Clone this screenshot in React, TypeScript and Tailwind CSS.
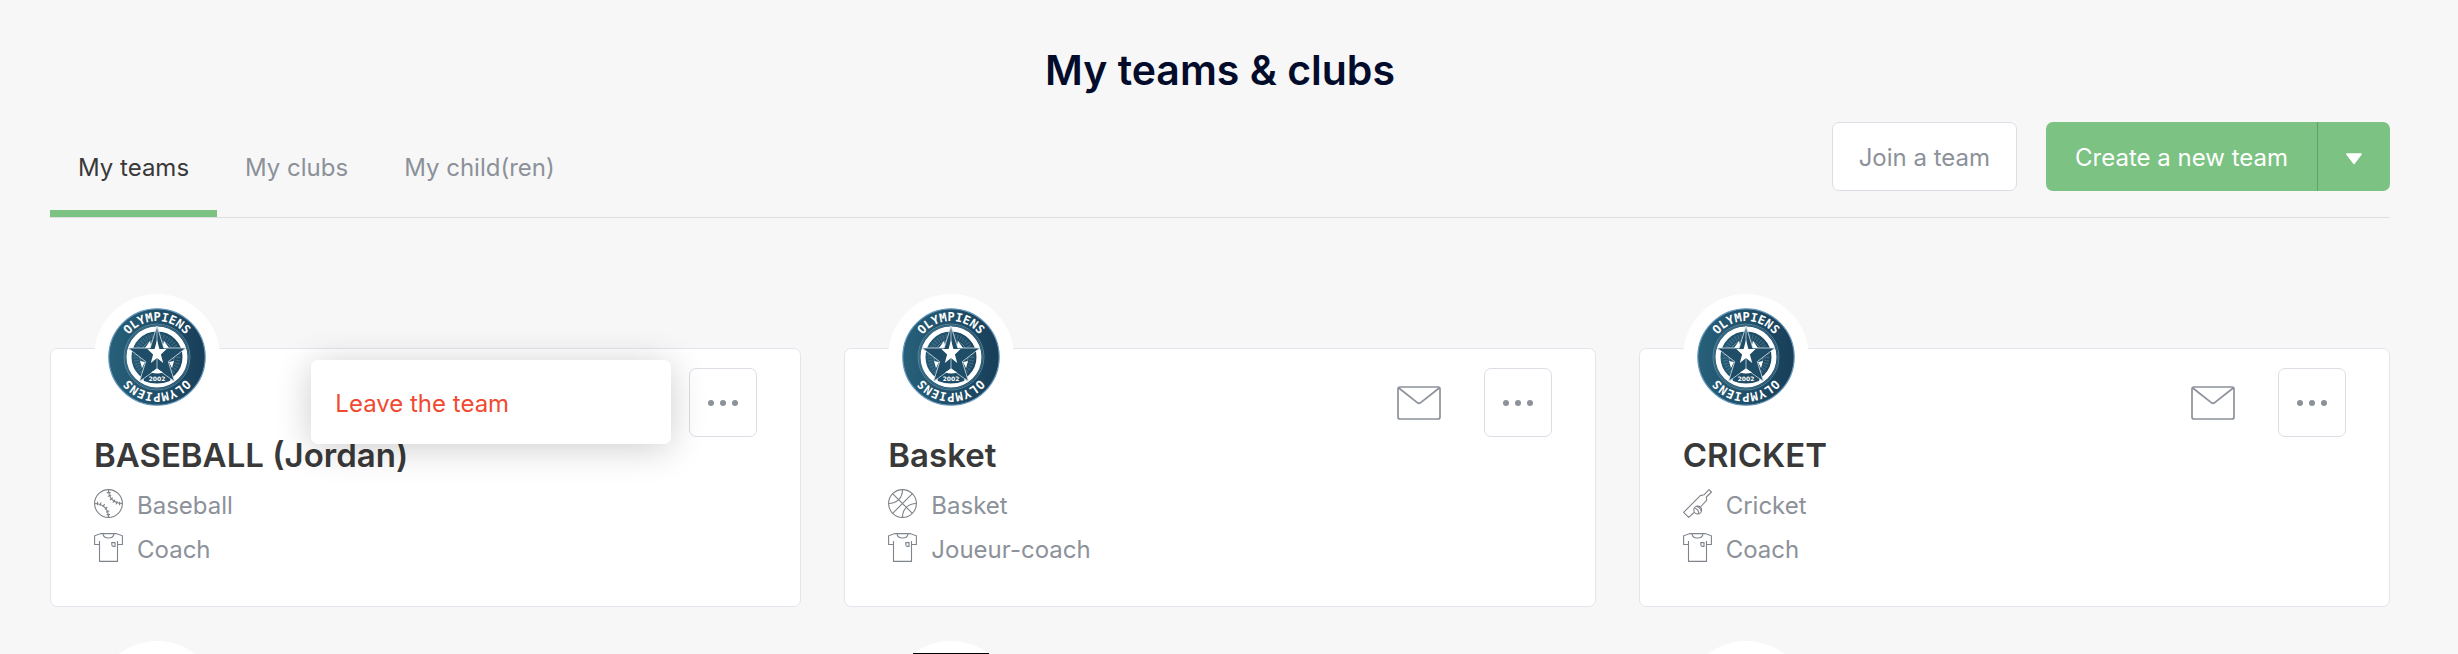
import React from "react";

type Sport = "baseball" | "basket" | "cricket";

type Team = {
  name: string;
  sport: Sport;
  sportLabel: string;
  role: string;
  menuOpen?: boolean;
};

const teams: Team[] = [
  { name: "BASEBALL (Jordan)", sport: "baseball", sportLabel: "Baseball", role: "Coach", menuOpen: true },
  { name: "Basket", sport: "basket", sportLabel: "Basket", role: "Joueur-coach" },
  { name: "CRICKET", sport: "cricket", sportLabel: "Cricket", role: "Coach" },
];

const STAR = "M0 -31 L6.8 -9 H29 L11.3 4.6 L17.5 24.5 L0 12 L-17.5 24.5 L-11.3 4.6 L-29 -9 H-6.8 Z";

function ClubLogo({ id }: { id: string }) {
  return (
    <svg viewBox="-49 -49 98 98" className="size-[98px]" role="img" aria-label="Olympiens 2002">
      <defs>
        <linearGradient id={`${id}-fill`} x1="0" x2="1" y1="0" y2="0">
          <stop offset="0" stopColor="#27607a" />
          <stop offset="1" stopColor="#183e58" />
        </linearGradient>
        <path id={`${id}-arc`} d="M-36 0 A36 36 0 0 1 36 0" />
      </defs>
      <circle r="48.2" fill={`url(#${id}-fill)`} stroke="#6596bb" strokeWidth="1.2" />
      <circle r="33" fill="none" stroke="#6d97ae" strokeWidth="0.7" />
      <circle r="31.6" fill="none" stroke="#4b7c96" strokeWidth="0.7" />
      <circle r="28" fill="none" stroke="#fff" strokeWidth="5" />
      <circle r="21" fill="none" stroke="#5c8499" strokeWidth="5" strokeDasharray="1.4 1.5" opacity="0.5" />
      <circle r="17" fill="none" stroke="#7d9fb0" strokeWidth="0.7" />
      <path d="M-12 -9 L-7 -16 L-5 -9 Z M12 -9 L7 -16 L5 -9 Z M-12 5 L-15 11 L-17 4 Z M12 5 L15 11 L17 4 Z" fill="#fff" />
      <path d={STAR} fill="#1f4c66" stroke="#dbe7ee" strokeWidth="0.8" />
      <path d="M-15 17 Q0 13 15 17 L13 24 Q0 29 -13 24 Z" fill="#1f4c66" />
      <path d="M0 -31 V12 M-17.5 24.5 L0 12 L17.5 24.5" fill="none" stroke="#c9dae4" strokeWidth="0.8" />
      <path d="M-6 15.5 L0 11.5 L6 15.5 Q0 17.5 -6 15.5 Z" fill="#fff" />
      <path d="M0 -17 L2.4 -8 H9.6 L3.9 -2.6 L6.2 6 L0 1 L-6.2 6 L-3.9 -2.6 L-9.6 -8 H-2.4 Z" fill="#fff" />
      <text y="24" textAnchor="middle" fill="#fff" className="font-['DejaVu_Sans'] text-[6px] font-bold">
        2002
      </text>
      <g fill="#fff" className="font-['DejaVu_Sans_Mono',monospace] text-[12px] font-bold">
        <text>
          <textPath href={`#${id}-arc`} startOffset="50%" textAnchor="middle">OLYMPIENS</textPath>
        </text>
        <text transform="rotate(180)">
          <textPath href={`#${id}-arc`} startOffset="50%" textAnchor="middle">OLYMPIENS</textPath>
        </text>
      </g>
    </svg>
  );
}

function SportIcon({ sport }: { sport: Sport }) {
  return (
    <svg viewBox="0 0 29 29" className="size-[29px] shrink-0" fill="none" stroke="#7f8287" strokeWidth="1.1" aria-hidden="true">
      {sport === "baseball" && (
        <>
          <circle cx="14.5" cy="14.5" r="13.9" />
          <path d="M14.5 .5 C14.5 8 19 14.5 28.5 14.5 M.5 14.5 C8 14.5 14.5 19 14.5 28.5" />
          <path d="M12.8 3.6 H16.6 M13.8 7.4 L17.2 6 M16 11 L18.8 8.6 M19 13.6 L21 10.6 M22.2 15.3 L23.2 11.9 M25.6 16.2 V12.8 M3.5 12.8 V16.2 M6 16.8 L7 13.4 M8.8 18 L10.6 15.1 M10.8 20.4 L13.3 18 M12 23.2 L15.3 21.8 M12.6 25.6 H16" />
        </>
      )}
      {sport === "basket" && (
        <>
          <circle cx="14.5" cy="14.5" r="13.9" />
          <path d="M4.6 4.6 L24.4 24.4 M24.4 4.6 L4.6 24.4 M14.5 .5 C14.5 9 9 14.5 .5 14.5 M28.5 14.5 C20 14.5 14.5 20 14.5 28.5" />
        </>
      )}
      {sport === "cricket" && (
        <>
          <path d="M11 23.5 L5.7 28.4 L.6 23.4 L17.3 6.6 L21 5.8 L26 .7 L28.4 3 L23.4 8 L23.6 11.3 L17.5 18" strokeLinejoin="round" />
          <circle cx="14.7" cy="21" r="3.9" />
          <path d="M11.6 19.5 C13.5 19.5 15.5 21 15.8 24.5 M13.6 17.3 C15.5 17.8 17.6 19.5 18.2 22" />
        </>
      )}
    </svg>
  );
}

function JerseyIcon() {
  return (
    <svg viewBox="0 0 29 29" className="size-[29px] shrink-0" fill="none" stroke="#7f848d" strokeWidth="1.1" aria-hidden="true">
      <path d="M5.5 8 V28.4 H23.5 V8 M5.5 11.5 H.6 V2.8 L7 .6 H22 L28.4 2.8 V11.5 H23.5" />
      <path d="M9 .6 C9.5 6.5 19.5 6.5 20 .6 M17.8 9.6 H21 V13.4 H19.2 Q17.8 13.4 17.8 11.6 Z" />
    </svg>
  );
}

function MailIcon() {
  return (
    <svg viewBox="0 0 44 34" className="h-[34px] w-11" fill="none" stroke="#8c919a" strokeWidth="1.7" strokeLinejoin="round" aria-hidden="true">
      <rect x="1" y="1" width="42" height="32" rx="2" />
      <path d="M1.8 2 L20.6 16.8 Q22 17.8 23.4 16.8 L42.2 2" />
    </svg>
  );
}

function MoreButton() {
  return (
    <button
      type="button"
      aria-label="More options"
      className="flex h-[69px] w-[68px] items-center justify-center gap-1.5 rounded-[7px] border border-[#dcdee6] bg-transparent"
    >
      <span className="size-1.5 rounded-full bg-[#8c919a]" />
      <span className="size-1.5 rounded-full bg-[#8c919a]" />
      <span className="size-1.5 rounded-full bg-[#8c919a]" />
    </button>
  );
}

function TeamCard({ team }: { team: Team }) {
  return (
    <article className="mt-[54px] rounded-[7px] border border-[#e4e5ec] bg-white px-[43px] pb-10">
      <div className="flex items-start justify-between">
        <div className="-mt-[55px] flex size-[126px] items-center justify-center rounded-full bg-white">
          <ClubLogo id={team.sport} />
        </div>
        <div className="relative mt-[19px] flex items-center gap-[43px]">
          {!team.menuOpen && (
            <a href="#message" aria-label="Send a message">
              <MailIcon />
            </a>
          )}
          <MoreButton />
          {team.menuOpen && (
            <div className="absolute -top-2 right-full mr-[18px] w-[360px] rounded-[7px] bg-white px-6 pt-7 pb-6 shadow-[0_4px_36px_rgba(0,0,0,0.2)]">
              <button type="button" className="block text-2xl text-[#f04a32]">
                Leave the team
              </button>
            </div>
          )}
        </div>
      </div>
      <h2 className="-mt-1 text-[33px] leading-[44px] font-semibold text-[#393939]">{team.name}</h2>
      <ul className="mt-3 flex flex-col gap-[11px] text-2xl text-[#8c919a]">
        <li className="flex items-start gap-3.5">
          <SportIcon sport={team.sport} />
          <span className="pt-px">{team.sportLabel}</span>
        </li>
        <li className="flex items-start gap-3.5">
          <JerseyIcon />
          <span className="pt-px">{team.role}</span>
        </li>
      </ul>
    </article>
  );
}

export default function App() {
  return (
    <main className="h-screen overflow-hidden bg-[#f7f7f7] pr-[68px] pl-[50px] font-['Inter',sans-serif]">
      <h1 className="pt-11 pb-[26px] text-center text-[41px] leading-[52px] font-semibold text-[#040c2b]">
        My teams &amp; clubs
      </h1>

      <div className="flex items-start justify-between border-b border-[#dcdee4]">
        <nav className="flex text-2xl text-[#8c919a]">
          <a href="#teams" aria-current="page" className="border-b-[7px] border-[#7bc283] px-7 pt-[30px] pb-[26px] text-[#393939]">
            My teams
          </a>
          <a href="#clubs" className="px-7 pt-[30px]">
            My clubs
          </a>
          <a href="#children" className="px-7 pt-[30px]">
            My child(ren)
          </a>
        </nav>
        <div className="flex gap-[29px] text-2xl">
          <button type="button" className="h-[69px] rounded-[7px] border border-[#dcdee6] bg-white px-[26px] pt-[3px] text-[#8c919a]">
            Join a team
          </button>
          <div className="flex h-[69px] overflow-hidden rounded-[7px] bg-[#7bc283] text-white">
            <button type="button" className="px-[29px] pt-[3px]">
              Create a new team
            </button>
            <button type="button" aria-label="More creation options" className="flex w-[73px] items-center justify-center border-l border-[#679c70] pt-1">
              <svg viewBox="0 0 18 12" className="h-3 w-[18px]" aria-hidden="true">
                <path d="M1.8 1 H16.2 L9 10.6 Z" fill="#fff" stroke="#fff" strokeWidth="1.4" strokeLinejoin="round" />
              </svg>
            </button>
          </div>
        </div>
      </div>

      <section className="mt-[76px] grid grid-cols-3 gap-x-[43px] gap-y-[34px]">
        {teams.map((team) => (
          <TeamCard key={team.name} team={team} />
        ))}
        {["left", "middle", "right"].map((slot) => (
          <article key={slot} className="mt-[54px] h-64 rounded-[7px] border border-[#e4e5ec] bg-white px-[43px]">
            <div className="-mt-[55px] flex size-[126px] items-center justify-center rounded-full bg-white">
              {slot === "middle" && <div className="h-[102px] w-[76px] bg-black" />}
            </div>
          </article>
        ))}
      </section>
    </main>
  );
}
